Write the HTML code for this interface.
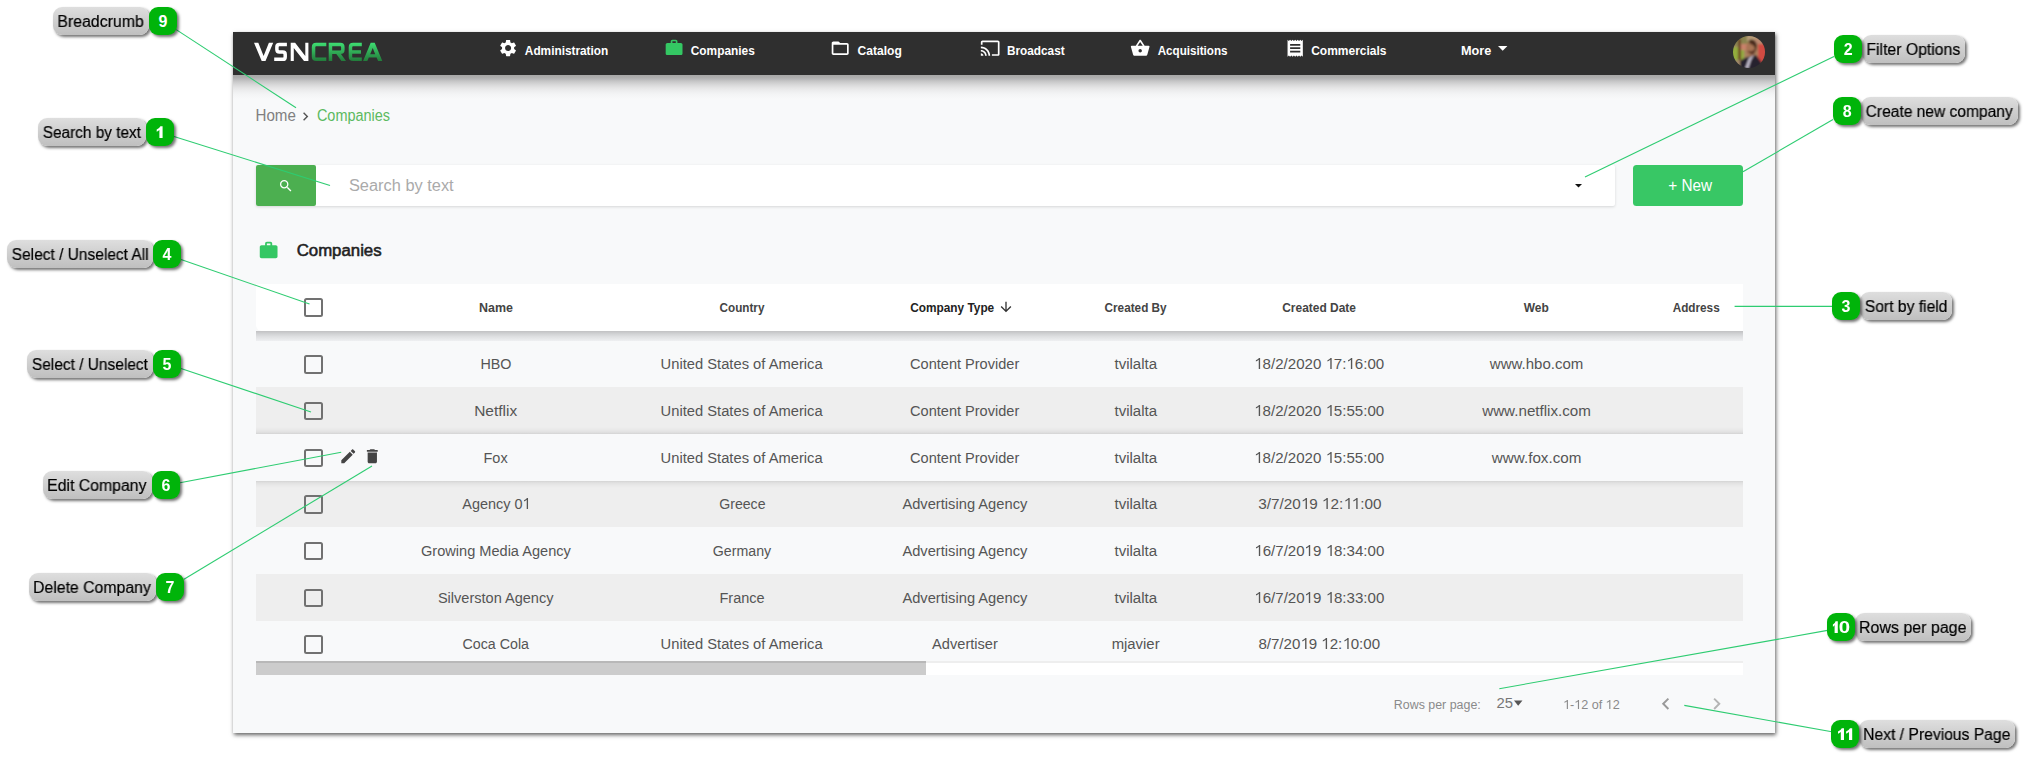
<!DOCTYPE html>
<html><head><meta charset="utf-8"><title>Companies</title>
<style>
html,body{margin:0;padding:0;background:#fff;}
body{width:2029px;height:759px;position:relative;overflow:hidden;font-family:"Liberation Sans",sans-serif;}
.t{position:absolute;white-space:pre;line-height:1;font-family:"Liberation Sans",sans-serif;transform-origin:0 0;}
.abs{position:absolute;}
.win{position:absolute;left:233px;top:32px;width:1542px;height:701px;background:#f8f9fa;box-shadow:1px 2px 4px rgba(0,0,0,.62);}
.nav{position:absolute;left:233px;top:32px;width:1542px;height:43px;background:#2f2f2f;}
.navsh{position:absolute;left:233px;top:75px;width:1542px;height:25px;background:linear-gradient(#a8a8a8,#aeaeae 10%,#b6b6b8 16%,#c4c4c5 24%,#cfcfd0 32%,#d9d9da 40%,#e3e3e4 50%,#ebebec 60%,#f0f1f2 70%,#f4f5f6 80%,#f7f8f9 92%,#f8f9fa);}
.cb{position:absolute;width:14.5px;height:14.5px;border:2px solid #717171;border-radius:2.5px;}
.lab{position:absolute;height:28px;border-radius:9px;background:linear-gradient(#dedede,#bfbfbf);box-shadow:2px 2px 3px rgba(0,0,0,.55);}
.bad{position:absolute;width:28px;height:28px;border-radius:9px;background:#00b40a;box-shadow:2px 2px 3px rgba(0,0,0,.55);}
svg{position:absolute;overflow:visible;}
svg.o{position:static;display:inline-block;width:.556em;height:.716em;vertical-align:baseline;}
</style></head><body>

<div class="win"></div>
<div class="navsh"></div>
<div class="nav"></div>
<svg width="2029" height="759" viewBox="0 0 2029 759" style="left:0;top:0">
<defs><linearGradient id="lg" gradientUnits="userSpaceOnUse" x1="0" y1="42.8" x2="0" y2="61.1"><stop offset="0" stop-color="#3ede72"/><stop offset="1" stop-color="#227a3a"/></linearGradient></defs>
<g fill="#fff" stroke="none">
<path d="M254 42.8h4.3l5.3 13.2 5.3-13.2h4.3l-7.7 18.3h-3.8z"/>
<path d="M290.7 42.8h4.4l10.2 13.2V42.8h3.1v18.3h-4.4L293.8 47.9v13.2h-3.1z"/>
</g>
<path d="M286.9 44.55H279.4Q276.9 44.55 276.9 47V49.5Q276.9 51.95 279.4 51.95H282.7Q285.2 51.95 285.2 54.4V56.9Q285.2 59.35 282.7 59.35H274.2" fill="none" stroke="#fff" stroke-width="3.5"/>
<g fill="none" stroke="url(#lg)" stroke-width="3.5">
<path d="M326.3 44.55H316.2Q313.55 44.55 313.55 47.2V56.7Q313.55 59.35 316.2 59.35H326.3"/>
<path d="M330.45 61.1V44.55H340.3Q342.85 44.55 342.85 47.1V49.8Q342.85 52.35 340.3 52.35H331"/>
<path d="M361.8 44.55H353.1Q350.45 44.55 350.45 47.2V56.7Q350.45 59.35 353.1 59.35H361.8M350.5 51.95H361"/>
</g>
<g fill="url(#lg)">
<path d="M335.8 53.3h4.6l5.6 7.8h-4.6z"/>
<path d="M363.1 61.1h4.2l1.5-3.6h7.8l1.5 3.6h4.2l-7.6-18.3h-4zM370.2 54.2l2.5-6.2 2.5 6.2z"/>
</g>
</svg>
<span class="t" style="left:524px;top:45px;font-size:12.5px;color:#fff;font-weight:700;transform:translateX(0.85px) scaleX(0.9460);">Administration</span>
<span class="t" style="left:690px;top:45px;font-size:12.5px;color:#fff;font-weight:700;transform:translateX(0.72px) scaleX(0.9507);">Companies</span>
<span class="t" style="left:857px;top:45px;font-size:12.5px;color:#fff;font-weight:700;transform:translateX(0.62px) scaleX(0.9640);">Catalog</span>
<span class="t" style="left:1006px;top:45px;font-size:12.5px;color:#fff;font-weight:700;transform:translateX(0.97px) scaleX(0.9430);">Broadcast</span>
<span class="t" style="left:1157px;top:45px;font-size:12.5px;color:#fff;font-weight:700;transform:translateX(0.65px) scaleX(0.9309);">Acquisitions</span>
<span class="t" style="left:1311px;top:45px;font-size:12.5px;color:#fff;font-weight:700;transform:translateX(0.22px) scaleX(0.9587);">Commercials</span>
<span class="t" style="left:1461px;top:45px;font-size:12.5px;color:#fff;font-weight:700;transform:translateX(0.01px) scaleX(1.0140);">More</span>
<span class="t" style="left:255px;top:108px;font-size:16px;color:#808080;font-weight:400;transform:translateX(0.50px) scaleX(0.9452);">Home</span>
<span class="t" style="left:316px;top:108px;font-size:16px;color:#5cba60;font-weight:400;transform:translateX(0.91px) scaleX(0.9044);">Companies</span>
<div class="abs" style="left:256px;top:165px;width:1358.6px;height:41px;background:#fff;box-shadow:0 1px 3px rgba(0,0,0,.14);border-radius:2px;"></div>
<div class="abs" style="left:256px;top:165px;width:60px;height:41px;background:#4caf50;border-radius:2px;"></div>
<span class="t" style="left:348px;top:178px;font-size:16px;color:#aaaaaa;font-weight:400;transform:translateX(0.93px) scaleX(1.0239);">Search by text</span>
<div class="abs" style="left:1633px;top:164.6px;width:110.2px;height:41.8px;background:#38c765;border-radius:3.5px;"></div>
<span class="t" style="left:1668px;top:178px;font-size:16px;color:#fff;font-weight:400;transform:translateX(0.28px) scaleX(0.9573);">+ New</span>
<span class="t" style="left:296px;top:243px;font-size:16px;color:#222;font-weight:400;transform:translateX(0.68px) scaleX(1.0491);-webkit-text-stroke:0.55px #222;">Companies</span>
<div class="abs" style="left:256px;top:331px;width:1487px;height:10px;background:linear-gradient(#c1c1c3,#d2d3d5 30%,#dedfe1 55%,#e7e8ea 80%,#eeeff1);"></div>
<div class="abs" style="left:255.5px;top:284px;width:1487.5px;height:47px;background:#fff;border-radius:0 0 0 6px;"></div>
<span class="t" style="left:479px;top:302px;font-size:12.5px;color:#444;font-weight:700;transform:translateX(0.03px) scaleX(0.9954);">Name</span>
<span class="t" style="left:719px;top:302px;font-size:12.5px;color:#444;font-weight:700;transform:translateX(0.53px) scaleX(0.9372);">Country</span>
<span class="t" style="left:1104px;top:302px;font-size:12.5px;color:#444;font-weight:700;transform:translateX(0.53px) scaleX(0.9407);">Created By</span>
<span class="t" style="left:1282px;top:302px;font-size:12.5px;color:#444;font-weight:700;transform:translateX(0.22px) scaleX(0.9563);">Created Date</span>
<span class="t" style="left:1523px;top:302px;font-size:12.5px;color:#444;font-weight:700;transform:translateX(0.70px) scaleX(0.9561);">Web</span>
<span class="t" style="left:1672px;top:302px;font-size:12.5px;color:#444;font-weight:700;transform:translateX(0.65px) scaleX(0.9405);">Address</span>
<span class="t" style="left:910px;top:302px;font-size:12.5px;color:#222;font-weight:700;transform:translateX(0.23px) scaleX(0.9470);">Company Type</span>
<div class="abs" style="left:256px;top:387.27px;width:1487px;height:46.67px;background:#eeeeee;"></div>
<div class="abs" style="left:256px;top:480.61px;width:1487px;height:46.67px;background:#eeeeee;"></div>
<div class="abs" style="left:256px;top:573.95px;width:1487px;height:46.67px;background:#eeeeee;"></div>
<div class="abs" style="left:256px;top:433.94px;width:1487px;height:46.67px;background:#f8f9fa;"></div>
<div class="abs" style="left:256px;top:426.94px;width:1487px;height:7px;background:linear-gradient(rgba(0,0,0,0),rgba(0,0,0,.025) 40%,rgba(0,0,0,.06) 75%,rgba(0,0,0,.11));"></div>
<div class="abs" style="left:256px;top:480.61px;width:1487px;height:7px;background:linear-gradient(rgba(0,0,0,.11),rgba(0,0,0,.06) 25%,rgba(0,0,0,.025) 60%,rgba(0,0,0,0));"></div>
<div class="cb" style="left:304px;top:355.24px;"></div>
<span class="t" style="left:480px;top:356px;font-size:15.4px;color:#555;font-weight:400;transform:translateX(0.44px) scaleX(0.9307);">HBO</span>
<span class="t" style="left:660px;top:356px;font-size:15.4px;color:#555;font-weight:400;transform:translateX(0.60px) scaleX(0.9569);">United States of America</span>
<span class="t" style="left:910px;top:356px;font-size:15.4px;color:#555;font-weight:400;transform:translateX(0.09px) scaleX(0.9450);">Content Provider</span>
<span class="t" style="left:1114px;top:356px;font-size:15.4px;color:#555;font-weight:400;transform:translateX(0.46px) scaleX(0.9775);">tvilalta</span>
<span class="t" style="left:1254px;top:356px;font-size:15.4px;color:#555;font-weight:400;transform:translateX(0.20px) scaleX(0.9802);"><svg class="o" viewBox="0 0 556 716"><path d="M392 0V716H302V118Q225 188 112 226V146Q250 92 322 0Z" fill="#555"/></svg>8/2/2020 <svg class="o" viewBox="0 0 556 716"><path d="M392 0V716H302V118Q225 188 112 226V146Q250 92 322 0Z" fill="#555"/></svg>7:<svg class="o" viewBox="0 0 556 716"><path d="M392 0V716H302V118Q225 188 112 226V146Q250 92 322 0Z" fill="#555"/></svg>6:00</span>
<span class="t" style="left:1489px;top:356px;font-size:15.4px;color:#555;font-weight:400;transform:translateX(0.80px) scaleX(0.9760);">www.hbo.com</span>
<div class="cb" style="left:304px;top:401.91px;"></div>
<span class="t" style="left:474px;top:403px;font-size:15.4px;color:#555;font-weight:400;transform:translateX(0.14px) scaleX(1.0054);">Netflix</span>
<span class="t" style="left:660px;top:403px;font-size:15.4px;color:#555;font-weight:400;transform:translateX(0.60px) scaleX(0.9569);">United States of America</span>
<span class="t" style="left:910px;top:403px;font-size:15.4px;color:#555;font-weight:400;transform:translateX(0.09px) scaleX(0.9450);">Content Provider</span>
<span class="t" style="left:1114px;top:403px;font-size:15.4px;color:#555;font-weight:400;transform:translateX(0.46px) scaleX(0.9775);">tvilalta</span>
<span class="t" style="left:1254px;top:403px;font-size:15.4px;color:#555;font-weight:400;transform:translateX(0.20px) scaleX(0.9802);"><svg class="o" viewBox="0 0 556 716"><path d="M392 0V716H302V118Q225 188 112 226V146Q250 92 322 0Z" fill="#555"/></svg>8/2/2020 <svg class="o" viewBox="0 0 556 716"><path d="M392 0V716H302V118Q225 188 112 226V146Q250 92 322 0Z" fill="#555"/></svg>5:55:00</span>
<span class="t" style="left:1482px;top:403px;font-size:15.4px;color:#555;font-weight:400;transform:translateX(0.20px) scaleX(0.9856);">www.netflix.com</span>
<div class="cb" style="left:304px;top:448.58px;"></div>
<span class="t" style="left:483px;top:450px;font-size:15.4px;color:#555;font-weight:400;transform:translateX(0.52px) scaleX(0.9402);">Fox</span>
<span class="t" style="left:660px;top:450px;font-size:15.4px;color:#555;font-weight:400;transform:translateX(0.60px) scaleX(0.9569);">United States of America</span>
<span class="t" style="left:910px;top:450px;font-size:15.4px;color:#555;font-weight:400;transform:translateX(0.09px) scaleX(0.9450);">Content Provider</span>
<span class="t" style="left:1114px;top:450px;font-size:15.4px;color:#555;font-weight:400;transform:translateX(0.46px) scaleX(0.9775);">tvilalta</span>
<span class="t" style="left:1254px;top:450px;font-size:15.4px;color:#555;font-weight:400;transform:translateX(0.20px) scaleX(0.9802);"><svg class="o" viewBox="0 0 556 716"><path d="M392 0V716H302V118Q225 188 112 226V146Q250 92 322 0Z" fill="#555"/></svg>8/2/2020 <svg class="o" viewBox="0 0 556 716"><path d="M392 0V716H302V118Q225 188 112 226V146Q250 92 322 0Z" fill="#555"/></svg>5:55:00</span>
<span class="t" style="left:1491px;top:450px;font-size:15.4px;color:#555;font-weight:400;transform:translateX(0.80px) scaleX(0.9886);">www.fox.com</span>
<div class="cb" style="left:304px;top:495.25px;"></div>
<span class="t" style="left:462px;top:496px;font-size:15.4px;color:#555;font-weight:400;transform:translateX(0.28px) scaleX(0.9389);">Agency 0<svg class="o" viewBox="0 0 556 716"><path d="M392 0V716H302V118Q225 188 112 226V146Q250 92 322 0Z" fill="#555"/></svg></span>
<span class="t" style="left:719px;top:496px;font-size:15.4px;color:#555;font-weight:400;transform:translateX(0.21px) scaleX(0.9181);">Greece</span>
<span class="t" style="left:902px;top:496px;font-size:15.4px;color:#555;font-weight:400;transform:translateX(0.38px) scaleX(0.9545);">Advertising Agency</span>
<span class="t" style="left:1114px;top:496px;font-size:15.4px;color:#555;font-weight:400;transform:translateX(0.46px) scaleX(0.9775);">tvilalta</span>
<span class="t" style="left:1258px;top:496px;font-size:15.4px;color:#555;font-weight:400;transform:translateX(0.28px) scaleX(0.9930);">3/7/20<svg class="o" viewBox="0 0 556 716"><path d="M392 0V716H302V118Q225 188 112 226V146Q250 92 322 0Z" fill="#555"/></svg>9 <svg class="o" viewBox="0 0 556 716"><path d="M392 0V716H302V118Q225 188 112 226V146Q250 92 322 0Z" fill="#555"/></svg>2:<svg class="o" viewBox="0 0 556 716"><path d="M392 0V716H302V118Q225 188 112 226V146Q250 92 322 0Z" fill="#555"/></svg><svg class="o" viewBox="0 0 556 716"><path d="M392 0V716H302V118Q225 188 112 226V146Q250 92 322 0Z" fill="#555"/></svg>:00</span>
<div class="cb" style="left:304px;top:541.91px;"></div>
<span class="t" style="left:420px;top:543px;font-size:15.4px;color:#555;font-weight:400;transform:translateX(0.99px) scaleX(0.9467);">Growing Media Agency</span>
<span class="t" style="left:712px;top:543px;font-size:15.4px;color:#555;font-weight:400;transform:translateX(0.81px) scaleX(0.9216);">Germany</span>
<span class="t" style="left:902px;top:543px;font-size:15.4px;color:#555;font-weight:400;transform:translateX(0.38px) scaleX(0.9545);">Advertising Agency</span>
<span class="t" style="left:1114px;top:543px;font-size:15.4px;color:#555;font-weight:400;transform:translateX(0.46px) scaleX(0.9775);">tvilalta</span>
<span class="t" style="left:1254px;top:543px;font-size:15.4px;color:#555;font-weight:400;transform:translateX(0.30px) scaleX(0.9802);"><svg class="o" viewBox="0 0 556 716"><path d="M392 0V716H302V118Q225 188 112 226V146Q250 92 322 0Z" fill="#555"/></svg>6/7/20<svg class="o" viewBox="0 0 556 716"><path d="M392 0V716H302V118Q225 188 112 226V146Q250 92 322 0Z" fill="#555"/></svg>9 <svg class="o" viewBox="0 0 556 716"><path d="M392 0V716H302V118Q225 188 112 226V146Q250 92 322 0Z" fill="#555"/></svg>8:34:00</span>
<div class="cb" style="left:304px;top:588.59px;"></div>
<span class="t" style="left:437px;top:590px;font-size:15.4px;color:#555;font-weight:400;transform:translateX(0.89px) scaleX(0.9449);">Silverston Agency</span>
<span class="t" style="left:719px;top:590px;font-size:15.4px;color:#555;font-weight:400;transform:translateX(0.42px) scaleX(0.9435);">France</span>
<span class="t" style="left:902px;top:590px;font-size:15.4px;color:#555;font-weight:400;transform:translateX(0.38px) scaleX(0.9545);">Advertising Agency</span>
<span class="t" style="left:1114px;top:590px;font-size:15.4px;color:#555;font-weight:400;transform:translateX(0.46px) scaleX(0.9775);">tvilalta</span>
<span class="t" style="left:1254px;top:590px;font-size:15.4px;color:#555;font-weight:400;transform:translateX(0.30px) scaleX(0.9802);"><svg class="o" viewBox="0 0 556 716"><path d="M392 0V716H302V118Q225 188 112 226V146Q250 92 322 0Z" fill="#555"/></svg>6/7/20<svg class="o" viewBox="0 0 556 716"><path d="M392 0V716H302V118Q225 188 112 226V146Q250 92 322 0Z" fill="#555"/></svg>9 <svg class="o" viewBox="0 0 556 716"><path d="M392 0V716H302V118Q225 188 112 226V146Q250 92 322 0Z" fill="#555"/></svg>8:33:00</span>
<div class="cb" style="left:304px;top:635.25px;"></div>
<span class="t" style="left:462px;top:636px;font-size:15.4px;color:#555;font-weight:400;transform:translateX(0.51px) scaleX(0.9251);">Coca Cola</span>
<span class="t" style="left:660px;top:636px;font-size:15.4px;color:#555;font-weight:400;transform:translateX(0.60px) scaleX(0.9569);">United States of America</span>
<span class="t" style="left:932px;top:636px;font-size:15.4px;color:#555;font-weight:400;transform:translateX(0.08px) scaleX(0.9495);">Advertiser</span>
<span class="t" style="left:1111px;top:636px;font-size:15.4px;color:#555;font-weight:400;transform:translateX(0.63px) scaleX(0.9674);">mjavier</span>
<span class="t" style="left:1258px;top:636px;font-size:15.4px;color:#555;font-weight:400;transform:translateX(0.39px) scaleX(0.9807);">8/7/20<svg class="o" viewBox="0 0 556 716"><path d="M392 0V716H302V118Q225 188 112 226V146Q250 92 322 0Z" fill="#555"/></svg>9 <svg class="o" viewBox="0 0 556 716"><path d="M392 0V716H302V118Q225 188 112 226V146Q250 92 322 0Z" fill="#555"/></svg>2:<svg class="o" viewBox="0 0 556 716"><path d="M392 0V716H302V118Q225 188 112 226V146Q250 92 322 0Z" fill="#555"/></svg>0:00</span>
<div class="cb" style="left:304px;top:298.1px;"></div>
<div class="abs" style="left:256px;top:660.8px;width:1487px;height:14.4px;background:linear-gradient(#eeeeee 0,#eeeeee 2.1px,#fff 2.1px);"></div>
<div class="abs" style="left:256px;top:660.8px;width:669.8px;height:14.4px;background:linear-gradient(#b8b8b8 0,#b8b8b8 2.1px,#cccccc 2.1px);"></div>
<span class="t" style="left:1393px;top:699px;font-size:12.5px;color:#8a8a8a;font-weight:400;transform:translateX(0.81px) scaleX(0.9933);">Rows per page:</span>
<span class="t" style="left:1496px;top:697px;font-size:13.8px;color:#777;font-weight:400;transform:translateX(0.59px) scaleX(1.0786);">25</span>
<span class="t" style="left:1562px;top:699px;font-size:12.5px;color:#8a8a8a;font-weight:400;transform:translateX(0.99px) scaleX(1.0105);"><svg class="o" viewBox="0 0 556 716"><path d="M392 0V716H302V118Q225 188 112 226V146Q250 92 322 0Z" fill="#8a8a8a"/></svg>-<svg class="o" viewBox="0 0 556 716"><path d="M392 0V716H302V118Q225 188 112 226V146Q250 92 322 0Z" fill="#8a8a8a"/></svg>2 of <svg class="o" viewBox="0 0 556 716"><path d="M392 0V716H302V118Q225 188 112 226V146Q250 92 322 0Z" fill="#8a8a8a"/></svg>2</span>
<svg viewBox="0 0 24 24" width="20.2" height="20.2" preserveAspectRatio="none" style="left:497.65px;top:37.80px"><path d="M19.14 12.94c.04-.3.06-.61.06-.94 0-.32-.02-.64-.07-.94l2.03-1.58c.18-.14.23-.41.12-.61l-1.92-3.32c-.12-.22-.37-.29-.59-.22l-2.39.96c-.5-.38-1.03-.7-1.62-.94l-.36-2.54c-.04-.24-.24-.41-.48-.41h-3.84c-.24 0-.43.17-.47.41l-.36 2.54c-.59.24-1.13.57-1.62.94l-2.39-.96c-.22-.08-.47 0-.59.22L2.74 8.87c-.12.21-.08.47.12.61l2.03 1.58c-.05.3-.09.63-.09.94s.02.64.07.94l-2.03 1.58c-.18.14-.23.41-.12.61l1.92 3.32c.12.22.37.29.59.22l2.39-.96c.5.38 1.03.7 1.62.94l.36 2.54c.05.24.24.41.48.41h3.84c.24 0 .44-.17.47-.41l.36-2.54c.59-.24 1.13-.56 1.62-.94l2.39.96c.22.08.47 0 .59-.22l1.92-3.32c.12-.22.07-.47-.12-.61l-2.01-1.58zM12 15.6c-1.98 0-3.6-1.62-3.6-3.6s1.62-3.6 3.6-3.6 3.6 1.62 3.6 3.6-1.62 3.6-3.6 3.6z" fill="#fff"/></svg>
<svg viewBox="0 0 24 24" width="20.2" height="19.5" preserveAspectRatio="none" style="left:663.90px;top:38.35px"><path d="M20 6h-4V4c0-1.11-.89-2-2-2h-4c-1.11 0-2 .89-2 2v2H4c-1.11 0-1.99.89-1.99 2L2 19c0 1.11.89 2 2 2h16c1.11 0 2-.89 2-2V8c0-1.11-.89-2-2-2zm-6 0h-4V4h4v2z" fill="#34c763"/></svg>
<svg viewBox="0 0 24 24" width="20.4" height="20.4" preserveAspectRatio="none" style="left:830.10px;top:37.90px"><path d="M20 6h-8l-2-2H4c-1.1 0-1.99.9-1.99 2L2 18c0 1.1.9 2 2 2h16c1.1 0 2-.9 2-2V8c0-1.1-.9-2-2-2zm0 12H4V8h16v10z" fill="#fff"/></svg>
<svg viewBox="0 0 24 24" width="20.4" height="20.4" preserveAspectRatio="none" style="left:980.00px;top:38.00px"><path d="M21 3H3c-1.1 0-2 .9-2 2v3h2V5h18v14h-7v2h7c1.1 0 2-.9 2-2V5c0-1.1-.9-2-2-2zM1 18v3h3c0-1.66-1.34-3-3-3zm0-4v2c2.76 0 5 2.24 5 5h2c0-3.87-3.13-7-7-7zm0-4v2c4.97 0 9 4.03 9 9h2c0-6.08-4.93-11-11-11z" fill="#fff"/></svg>
<svg viewBox="0 0 24 24" width="20.4" height="20.4" preserveAspectRatio="none" style="left:1130.20px;top:38.00px"><path d="M17.21 9l-4.38-6.56c-.19-.28-.51-.42-.83-.42-.32 0-.64.14-.83.43L6.79 9H2c-.55 0-1 .45-1 1 0 .09.01.18.04.27l2.54 9.27c.23.84 1 1.46 1.92 1.46h13c.92 0 1.69-.62 1.93-1.46l2.54-9.27L23 10c0-.55-.45-1-1-1h-4.79zM9 9l3-4.4L15 9H9zm3 8c-1.1 0-2-.9-2-2s.9-2 2-2 2 .9 2 2-.9 2-2 2z" fill="#fff"/></svg>
<svg viewBox="0 0 24 24" width="20.4" height="20.4" preserveAspectRatio="none" style="left:1284.50px;top:37.90px"><path d="M18 17H6v-2h12v2zm0-4H6v-2h12v2zm0-4H6V7h12v2zM3 22l1.5-1.5L6 22l1.5-1.5L9 22l1.5-1.5L12 22l1.5-1.5L15 22l1.5-1.5L18 22l1.5-1.5L21 22V2l-1.5 1.5L18 2l-1.5 1.5L15 2l-1.5 1.5L12 2l-1.5 1.5L9 2 7.5 3.5 6 2 4.5 3.5 3 2v20z" fill="#fff"/></svg>
<svg width="10" height="5" viewBox="0 0 10 5" style="left:1497.8px;top:45.7px"><path d="M0 0h9.4L4.7 4.7z" fill="#fff"/></svg>
<svg width="32" height="32" viewBox="0 0 32 32" style="left:1732.5px;top:35.9px">
<defs><clipPath id="av"><circle cx="16" cy="16" r="16"/></clipPath><filter id="bl"><feGaussianBlur stdDeviation="0.9"/></filter></defs>
<g clip-path="url(#av)"><g filter="url(#bl)">
<rect x="-2" y="-2" width="36" height="36" fill="#a98562"/>
<rect x="-2" y="-2" width="18" height="12" fill="#8a8450"/>
<rect x="14" y="-2" width="14" height="7" fill="#b89c78"/>
<rect x="-2" y="11" width="13" height="13" fill="#93ad3c"/>
<rect x="5" y="3" width="3" height="23" fill="#6f4a26"/>
<rect x="8" y="8" width="6" height="6" fill="#c9826a"/>
<rect x="25" y="7" width="9" height="20" fill="#d14c42"/>
<rect x="22" y="2" width="8" height="6" fill="#b98a70"/>
<path d="M14 7 q5 -3 8 1 l1 8 -3 5 -6 -2 -1 -7z" fill="#a87455"/>
<path d="M16 4 q6 -2 8 5 l-1 7 -2 -6 -5 -3z" fill="#4a2c1c"/>
<path d="M14 15 l5 4 3 -2 0 -4 -3 2z" fill="#5e3826"/>
<path d="M4 30 q4 -8 11 -9 l8 -2 6 8 2 9 h-27z" fill="#26222d"/>
<path d="M12 33 l4 -11 5 -3 -3 5 -3 9z" fill="#c9c3d3"/>
<rect x="-2" y="24" width="9" height="8" fill="#a08868"/>
</g></g></svg>
<svg viewBox="0 0 24 24" width="21.3" height="20.8" preserveAspectRatio="none" style="left:257.85px;top:239.80px"><path d="M20 6h-4V4c0-1.11-.89-2-2-2h-4c-1.11 0-2 .89-2 2v2H4c-1.11 0-1.99.89-1.99 2L2 19c0 1.11.89 2 2 2h16c1.11 0 2-.89 2-2V8c0-1.11-.89-2-2-2zm-6 0h-4V4h4v2z" fill="#34c763"/></svg>
<svg viewBox="0 0 24 24" width="15.7" height="15.7" preserveAspectRatio="none" style="left:277.95px;top:177.75px"><path d="M15.5 14h-.79l-.28-.27C15.41 12.59 16 11.11 16 9.5 16 5.91 13.09 3 9.5 3S3 5.91 3 9.5 5.91 16 9.5 16c1.61 0 3.09-.59 4.23-1.57l.27.28v.79l5 4.99L20.49 19l-4.99-5zm-6 0C7.01 14 5 11.99 5 9.5S7.01 5 9.5 5 14 7.01 14 9.5 11.99 14 9.5 14z" fill="#fff"/></svg>
<svg width="8" height="4" viewBox="0 0 8 4" style="left:1575px;top:183.6px"><path d="M0 0h7L3.5 3.5z" fill="#111"/></svg>
<svg viewBox="0 0 24 24" width="16" height="16" preserveAspectRatio="none" style="left:998.00px;top:299.00px"><path d="M20 12l-1.41-1.41L13 16.17V4h-2v12.17l-5.58-5.59L4 12l8 8 8-8z" fill="#333"/></svg>
<svg viewBox="0 0 24 24" width="18.5" height="18.5" preserveAspectRatio="none" style="left:338.95px;top:446.65px"><path d="M3 17.25V21h3.75L17.81 9.94l-3.75-3.75L3 17.25zM20.71 7.04c.39-.39.39-1.02 0-1.41l-2.34-2.34c-.39-.39-1.02-.39-1.41 0l-1.83 1.83 3.75 3.75 1.83-1.83z" fill="#444"/></svg>
<svg viewBox="0 0 24 24" width="18.6" height="18.6" preserveAspectRatio="none" style="left:363.35px;top:446.50px"><path d="M6 19c0 1.1.9 2 2 2h8c1.1 0 2-.9 2-2V7H6v12zM19 4h-3.5l-1-1h-5l-1 1H5v2h14V4z" fill="#444"/></svg>
<svg viewBox="0 0 24 24" width="20.4" height="25" preserveAspectRatio="none" style="left:1507.55px;top:689.90px"><path d="M7 10l5 5 5-5z" fill="#555"/></svg>
<svg viewBox="0 0 24 24" width="23.5" height="23.5" preserveAspectRatio="none" style="left:1653.75px;top:692.45px"><path d="M15.41 7.41L14 6l-6 6 6 6 1.41-1.41L10.83 12z" fill="#999"/></svg>
<svg viewBox="0 0 24 24" width="23.5" height="23.5" preserveAspectRatio="none" style="left:1704.75px;top:692.45px"><path d="M10 6L8.59 7.41 13.17 12l-4.58 4.59L10 18l6-6z" fill="#b5b5b5"/></svg>
<svg viewBox="0 0 24 24" width="17" height="17" preserveAspectRatio="none" style="left:297.10px;top:108.30px"><path d="M10 6L8.59 7.41 13.17 12l-4.58 4.59L10 18l6-6z" fill="#555"/></svg>
<svg width="2029" height="759" style="left:0;top:0" viewBox="0 0 2029 759"><line x1="176.2" y1="29.6" x2="296" y2="107.8" stroke="#2ecc71" stroke-width="1.1"/><line x1="174" y1="136.5" x2="330" y2="185.5" stroke="#2ecc71" stroke-width="1.1"/><line x1="181" y1="259.5" x2="309.5" y2="304" stroke="#2ecc71" stroke-width="1.1"/><line x1="181" y1="368.5" x2="311" y2="412" stroke="#2ecc71" stroke-width="1.1"/><line x1="180" y1="482.7" x2="341.2" y2="452.2" stroke="#2ecc71" stroke-width="1.1"/><line x1="184" y1="579.2" x2="372" y2="466" stroke="#2ecc71" stroke-width="1.1"/><line x1="1834" y1="56.4" x2="1585" y2="177" stroke="#2ecc71" stroke-width="1.1"/><line x1="1833" y1="119.6" x2="1743" y2="171.7" stroke="#2ecc71" stroke-width="1.1"/><line x1="1832" y1="306.4" x2="1734.6" y2="306.4" stroke="#2ecc71" stroke-width="1.1"/><line x1="1827.5" y1="630.4" x2="1499.3" y2="688.7" stroke="#2ecc71" stroke-width="1.1"/><line x1="1831.8" y1="731.8" x2="1684.3" y2="705.4" stroke="#2ecc71" stroke-width="1.1"/></svg>
<div class="lab" style="left:53.2px;top:7.1px;width:95.6px;"></div>
<div class="bad" style="left:149px;top:7.1px;"></div>
<span class="t" style="left:57px;top:14px;font-size:16px;color:#000;font-weight:400;transform:translateX(0.34px) scaleX(0.9915);will-change:transform;-webkit-text-stroke:0.2px #000;">Breadcrumb</span>
<span class="t" style="left:158px;top:14px;font-size:16px;color:#fff;font-weight:700;transform:translateX(0.62px) scaleX(1.0000);">9</span>
<div class="lab" style="left:38px;top:117.8px;width:108.0px;"></div>
<div class="bad" style="left:146px;top:117.8px;"></div>
<span class="t" style="left:42px;top:125px;font-size:16px;color:#000;font-weight:400;transform:translateX(0.78px) scaleX(0.9598);will-change:transform;-webkit-text-stroke:0.2px #000;">Search by text</span>
<svg width="2029" height="759" viewBox="0 0 2029 759" style="left:0;top:0"><path d="M162.60 126.30V138H159.40V130.00Q158.00 131.30 156.70 131.80V129.60Q159.18 128.70 160.40 126.30Z" fill="#fff"/></svg>
<div class="lab" style="left:7.1px;top:240px;width:145.7px;"></div>
<div class="bad" style="left:153px;top:240px;"></div>
<span class="t" style="left:11px;top:247px;font-size:16px;color:#000;font-weight:400;transform:translateX(0.67px) scaleX(0.9690);will-change:transform;-webkit-text-stroke:0.2px #000;">Select / Unselect All</span>
<span class="t" style="left:162px;top:247px;font-size:16px;color:#fff;font-weight:700;transform:translateX(0.50px) scaleX(1.0000);">4</span>
<div class="lab" style="left:27.2px;top:350px;width:125.6px;"></div>
<div class="bad" style="left:153px;top:350px;"></div>
<span class="t" style="left:31px;top:357px;font-size:16px;color:#000;font-weight:400;transform:translateX(0.87px) scaleX(0.9669);will-change:transform;-webkit-text-stroke:0.2px #000;">Select / Unselect</span>
<span class="t" style="left:162px;top:357px;font-size:16px;color:#fff;font-weight:700;transform:translateX(0.50px) scaleX(1.0000);">5</span>
<div class="lab" style="left:43.2px;top:470.8px;width:108.6px;"></div>
<div class="bad" style="left:152px;top:470.8px;"></div>
<span class="t" style="left:47px;top:478px;font-size:16px;color:#000;font-weight:400;transform:translateX(0.04px) scaleX(0.9899);will-change:transform;-webkit-text-stroke:0.2px #000;">Edit Company</span>
<span class="t" style="left:161px;top:478px;font-size:16px;color:#fff;font-weight:700;transform:translateX(0.50px) scaleX(1.0000);">6</span>
<div class="lab" style="left:29.2px;top:573.1px;width:126.6px;"></div>
<div class="bad" style="left:156px;top:573.1px;"></div>
<span class="t" style="left:33px;top:580px;font-size:16px;color:#000;font-weight:400;transform:translateX(0.04px) scaleX(0.9877);will-change:transform;-webkit-text-stroke:0.2px #000;">Delete Company</span>
<span class="t" style="left:165px;top:580px;font-size:16px;color:#fff;font-weight:700;transform:translateX(0.50px) scaleX(1.0000);">7</span>
<div class="lab" style="left:1862.1px;top:34.9px;width:103.3px;"></div>
<div class="bad" style="left:1834.1px;top:34.9px;"></div>
<span class="t" style="left:1866px;top:42px;font-size:16px;color:#000;font-weight:400;transform:translateX(0.44px) scaleX(0.9855);will-change:transform;-webkit-text-stroke:0.2px #000;">Filter Options</span>
<span class="t" style="left:1843px;top:42px;font-size:16px;color:#fff;font-weight:700;transform:translateX(0.72px) scaleX(1.0000);">2</span>
<div class="lab" style="left:1861px;top:97px;width:157.2px;"></div>
<div class="bad" style="left:1833.1px;top:97px;"></div>
<span class="t" style="left:1865px;top:104px;font-size:16px;color:#000;font-weight:400;transform:translateX(0.65px) scaleX(0.9724);will-change:transform;-webkit-text-stroke:0.2px #000;">Create new company</span>
<span class="t" style="left:1842px;top:104px;font-size:16px;color:#fff;font-weight:700;transform:translateX(0.66px) scaleX(1.0000);">8</span>
<div class="lab" style="left:1860px;top:292.2px;width:92.0px;"></div>
<div class="bad" style="left:1831.9px;top:292.2px;"></div>
<span class="t" style="left:1864px;top:299px;font-size:16px;color:#000;font-weight:400;transform:translateX(0.77px) scaleX(0.9789);will-change:transform;-webkit-text-stroke:0.2px #000;">Sort by field</span>
<span class="t" style="left:1841px;top:299px;font-size:16px;color:#fff;font-weight:700;transform:translateX(0.53px) scaleX(1.0000);">3</span>
<div class="lab" style="left:1855px;top:613.1px;width:116.4px;"></div>
<div class="bad" style="left:1826.9px;top:613.1px;"></div>
<span class="t" style="left:1858px;top:620px;font-size:16px;color:#000;font-weight:400;transform:translateX(0.93px) scaleX(0.9991);will-change:transform;-webkit-text-stroke:0.2px #000;">Rows per page</span>
<svg width="2029" height="759" viewBox="0 0 2029 759" style="left:0;top:0"><path d="M1837.80 621.30V633H1834.60V625.00Q1834.20 626.30 1832.90 626.80V624.60Q1834.96 623.70 1835.60 621.30Z" fill="#fff"/></svg>
<span class="t" style="left:1838px;top:620px;font-size:16px;color:#fff;font-weight:700;transform:translateX(0.80px) scaleX(1.2721);">0</span>
<div class="lab" style="left:1859.2px;top:720.4px;width:155.8px;"></div>
<div class="bad" style="left:1831px;top:720.4px;"></div>
<span class="t" style="left:1863px;top:727px;font-size:16px;color:#000;font-weight:400;transform:translateX(0.15px) scaleX(0.9794);will-change:transform;-webkit-text-stroke:0.2px #000;">Next / Previous Page</span>
<svg width="2029" height="759" viewBox="0 0 2029 759" style="left:0;top:0"><path d="M1844.00 728.30V740H1840.80V732.00Q1839.30 733.30 1838.00 733.80V731.60Q1840.52 730.70 1841.80 728.30Z" fill="#fff"/><path d="M1852.20 728.30V740H1849.00V732.00Q1847.40 733.30 1846.10 733.80V731.60Q1848.66 730.70 1850.00 728.30Z" fill="#fff"/></svg>
</body></html>
